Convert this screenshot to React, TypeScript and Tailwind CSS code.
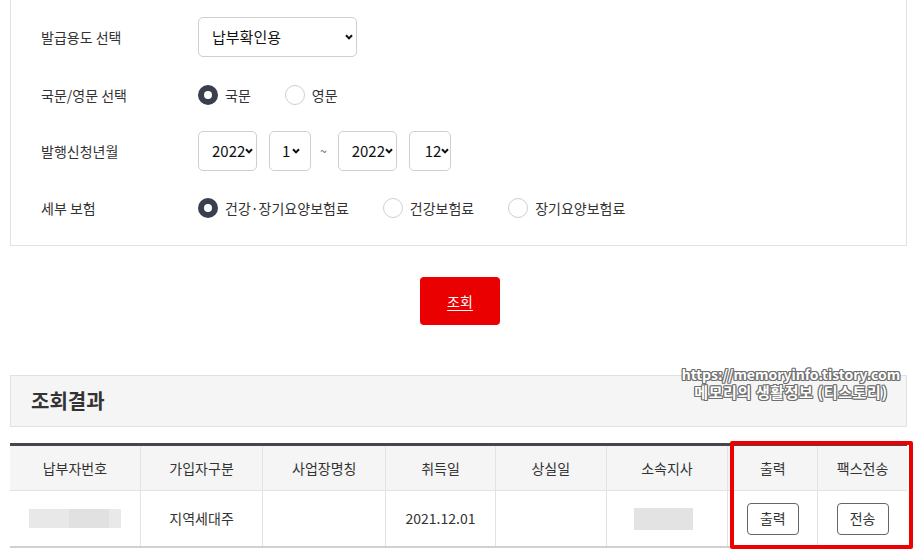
const FONT = { fontFamily: '"Noto Sans CJK KR", "Noto Sans", sans-serif' };

function Chevron() {
  return (
    <svg width="8" height="6" viewBox="0 0 8 6" className="shrink-0">
      <path d="M1 1.2 L4 4.4 L7 1.2" fill="none" stroke="#111" strokeWidth="2" />
    </svg>
  );
}

function SelectBox({ value, className }: { value: string; className: string }) {
  return (
    <div
      className={`flex h-10 items-center justify-between rounded-[5px] border border-[#cfcfcf] bg-white text-[15px] text-[#111] ${className}`}
    >
      <span>{value}</span>
      <Chevron />
    </div>
  );
}

function Radio({ label, checked }: { label: string; checked?: boolean }) {
  return (
    <label className="flex items-center gap-[7px] text-[14px] text-[#333]">
      {checked ? (
        <span className="flex h-5 w-5 items-center justify-center rounded-full bg-[#3b3e4f]">
          <span className="h-2 w-2 rounded-full bg-white" />
        </span>
      ) : (
        <span className="h-5 w-5 rounded-full border border-[#cfcfcf] bg-white" />
      )}
      {label}
    </label>
  );
}

function FormRow({ label, children }: { label: string; children: React.ReactNode }) {
  return (
    <div className="flex h-10 items-center">
      <div className="w-[157px] text-[14px] text-[#333]">{label}</div>
      {children}
    </div>
  );
}

const columns = [
  { title: "납부자번호", w: "w-[130px]" },
  { title: "가입자구분", w: "w-[123px]" },
  { title: "사업장명칭", w: "w-[123px]" },
  { title: "취득일", w: "w-[110px]" },
  { title: "상실일", w: "w-[111px]" },
  { title: "소속지사", w: "w-[122px]" },
  { title: "출력", w: "w-[90px]" },
  { title: "팩스전송", w: "w-[90px]" },
];

const outline = {
  textShadow:
    "1px 0 0 #6f6f6f, -1px 0 0 #6f6f6f, 0 1px 0 #6f6f6f, 0 -1px 0 #6f6f6f, 1px 1px 0 #6f6f6f, -1px -1px 0 #6f6f6f, 1px -1px 0 #6f6f6f, -1px 1px 0 #6f6f6f",
};

export default function App() {
  return (
    <div className="min-h-[558px] w-[917px] overflow-hidden bg-white" style={FONT}>
      {/* search panel */}
      <div className="mx-[10px] flex flex-col gap-[17px] border-x border-b border-[#e3e3e3] pb-[17px] pl-[30px] pt-[17px]">
        <FormRow label="발급용도 선택">
          <SelectBox value="납부확인용" className="w-[159px] pl-[13px] pr-[3px]" />
        </FormRow>
        <div className="mt-[1px]">
          <FormRow label="국문/영문 선택">
            <div className="flex items-center gap-[34px]">
              <Radio label="국문" checked />
              <Radio label="영문" />
            </div>
          </FormRow>
        </div>
        <div className="-mt-[1px]">
          <FormRow label="발행신청년월">
            <div className="flex items-center">
              <SelectBox value="2022" className="w-[59px] pl-[13px] pr-[5px]" />
              <SelectBox value="1" className="ml-[12px] w-[42px] pl-[12px] pr-[10px]" />
              <span className="ml-[9px] mr-[11px] text-[12px] text-[#555]">~</span>
              <SelectBox value="2022" className="w-[59px] pl-[13px] pr-[5px]" />
              <SelectBox value="12" className="ml-[12px] w-[42px] pl-[15px] pr-[1px]" />
            </div>
          </FormRow>
        </div>
        <FormRow label="세부 보험">
          <div className="flex items-center gap-[34px]">
            <Radio label="건강·장기요양보험료" checked />
            <Radio label="건강보험료" />
            <Radio label="장기요양보험료" />
          </div>
        </FormRow>
      </div>

      {/* search button */}
      <div className="flex justify-center pl-[3px] pt-[31px]">
        <button className="h-12 w-20 rounded-[4px] bg-[#ea0000] text-[14px] text-white underline underline-offset-[3px]">
          조회
        </button>
      </div>

      {/* result title */}
      <div className="relative mx-[10px] mt-[50px]">
        <div className="flex h-[52px] items-center border border-[#e1e1e1] bg-[#f5f5f5] pl-5 text-[20px] font-bold text-[#333]">
          조회결과
        </div>
        <div
          className="absolute left-[660px] top-[-9px] w-[242px] text-center font-bold leading-[17px] text-white"
          style={outline}
        >
          <div className="text-[14px]">https://memoryinfo.tistory.com</div>
          <div className="text-[15px] tracking-[0.6px]">메모리의 생활정보 (티스토리)</div>
        </div>
      </div>

      {/* result table */}
      <div className="relative mx-[10px] mt-4 border-t-[3px] border-[#45474f]">
        <div className="flex h-11 bg-[#f5f5f5]">
          {columns.map((c, i) => (
            <div
              key={c.title}
              className={`flex items-center justify-center text-[14px] text-[#333] ${c.w} ${i > 0 ? "border-l border-[#e3e3e3]" : ""}`}
            >
              {c.title}
            </div>
          ))}
        </div>
        <div className="flex h-[58px] border-y border-b-2 border-t-[#e3e3e3] border-b-[#d0d0d0] text-[14px] text-[#333]">
          <div className="flex w-[130px] items-center justify-center">
            <div className="flex h-[19px] w-[92px]">
              <div className="w-10 bg-[#e8e8e8]" />
              <div className="w-10 bg-[#e1e1e1]" />
              <div className="w-3 bg-[#e9e9e9]" />
            </div>
          </div>
          <div className="flex w-[123px] items-center justify-center border-l border-[#e3e3e3]">지역세대주</div>
          <div className="w-[123px] border-l border-[#e3e3e3]" />
          <div className="flex w-[110px] items-center justify-center border-l border-[#e3e3e3]">2021.12.01</div>
          <div className="w-[111px] border-l border-[#e3e3e3]" />
          <div className="flex w-[122px] items-center justify-center border-l border-[#e3e3e3]">
            <div className="mr-[7px] h-[22px] w-[59px] bg-[#e3e3e3]" />
          </div>
          <div className="flex w-[90px] items-center justify-center border-l border-[#e3e3e3]">
            <button className="h-8 w-[52px] rounded-[4px] border border-[#666] bg-white text-[14px] text-[#333]">출력</button>
          </div>
          <div className="flex w-[90px] items-center justify-center border-l border-[#e3e3e3]">
            <button className="h-8 w-[52px] rounded-[4px] border border-[#666] bg-white text-[14px] text-[#333]">전송</button>
          </div>
        </div>
        {/* highlight box */}
        <div className="absolute left-[720px] top-[-5px] h-[108px] w-[183px] rounded-[2px] border-4 border-[#ee0000]" />
      </div>
    </div>
  );
}
